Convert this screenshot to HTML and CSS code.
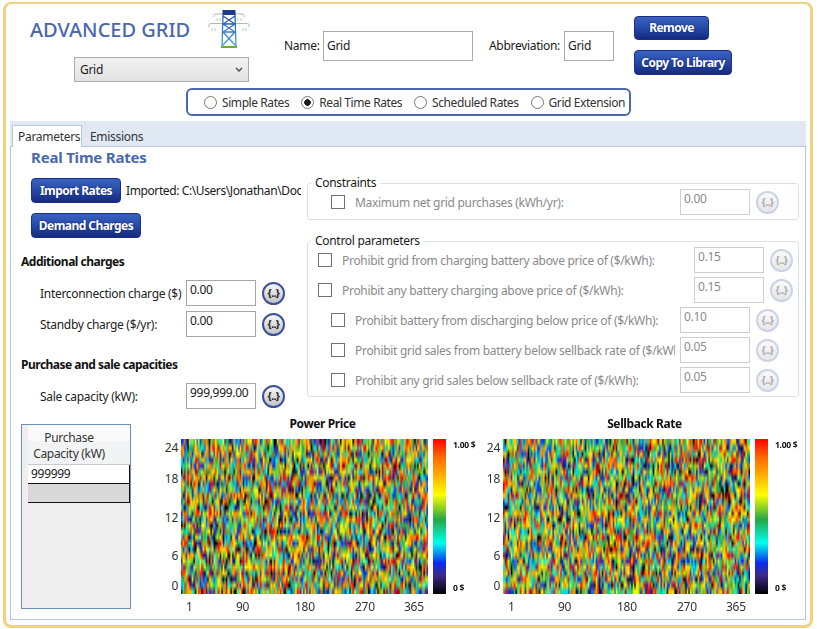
FILE: index.html
```html
<!DOCTYPE html>
<html>
<head>
	<title>Advanced Grid</title>
	<meta charset="utf-8">
	<link rel="stylesheet" href="styles.css">
</head>
<body>

<div class="window">

	<div class="header">
		<div class="top_row">
			<div class="brand">
				<div class="brand_title">
					<h1>ADVANCED GRID</h1>
					<svg class="tower" width="42" height="42" viewBox="0 0 42 42">
						<defs>
							<linearGradient id="tower_blue" x1="0" y1="0" x2="0" y2="1">
								<stop offset="0" stop-color="#2a55a8"/>
								<stop offset="1" stop-color="#4aa3e8"/>
							</linearGradient>
						</defs>
						<path d="M6 9V7.5Q6 6 8 6H34Q36 6 36 7.5V9" fill="none" stroke="#b5b5b5"/>
						<path d="M1 19V17Q1 15.5 3 15.5H39Q41 15.5 41 17V19" fill="none" stroke="#b5b5b5"/>
						<path d="M9 10v3M12 10v3M30 10v3M33 10v3M4 20v3M7 20v3M35 20v3M38 20v3" stroke="#a5dca5"/>
						<rect x="14.5" y="2" width="13" height="5" fill="#1c3a8a"/>
						<path d="M15 7L14 38M27 7L28 38M15 8L27 16L15 24L28 38M27 8L15 16L27 24L14 38M15 16H27M15 24H27" fill="none" stroke="url(#tower_blue)" stroke-width="1.3"/>
						<rect x="13" y="38" width="16" height="2" fill="#6bb01e"/>
					</svg>
				</div>
				<div class="select_wrap">
					<select class="combo"><option>Grid</option></select>
					<svg class="chevron" width="8" height="6" viewBox="0 0 8 6"><path d="M1 1L4 4L7 1" fill="none" stroke="#444" stroke-width="1.3"/></svg>
				</div>
			</div>
			<div class="fields">
				<label class="field_label name_label" for="name">Name:</label>
				<input class="text_box name_box" type="text" id="name" value="Grid">
				<label class="field_label abbr_label" for="abbr">Abbreviation:</label>
				<input class="text_box abbr_box" type="text" id="abbr" value="Grid">
			</div>
			<div class="actions">
				<button class="btn btn_remove">Remove</button>
				<button class="btn btn_copy">Copy To Library</button>
			</div>
		</div>
		<div class="rate_types">
			<label><input type="radio" name="rate"> Simple Rates</label>
			<label><input type="radio" name="rate" checked> Real Time Rates</label>
			<label><input type="radio" name="rate"> Scheduled Rates</label>
			<label><input type="radio" name="rate"> Grid Extension</label>
		</div>
	</div>

	<div class="tabstrip">
		<div class="tab active">Parameters</div>
		<div class="tab">Emissions</div>
	</div>

	<div class="panel">
		<div class="params">
			<div class="left_col">
				<h2>Real Time Rates</h2>
				<div class="import_row">
					<button class="btn btn_import">Import Rates</button>
					<span class="imported">Imported: C:\Users\Jonathan\Doc</span>
				</div>
				<button class="btn btn_demand">Demand Charges</button>

				<h3 class="first_h3">Additional charges</h3>
				<div class="charge_row">
					<span class="charge_label">Interconnection charge ($)</span>
					<input class="num_box" type="text" value="0.00">
					<button class="sens">{..}</button>
				</div>
				<div class="charge_row">
					<span class="charge_label">Standby charge ($/yr):</span>
					<input class="num_box" type="text" value="0.00">
					<button class="sens">{..}</button>
				</div>

				<h3 class="second_h3">Purchase and sale capacities</h3>
				<div class="charge_row">
					<span class="charge_label">Sale capacity (kW):</span>
					<input class="num_box" type="text" value="999,999.00">
					<button class="sens">{..}</button>
				</div>
			</div>

			<div class="right_col">
				<div class="group constraints">
					<div class="legend">Constraints</div>
					<div class="opt_row indent">
						<input type="checkbox" disabled>
						<span class="opt_label">Maximum net grid purchases (kWh/yr):</span>
						<input class="num_box" type="text" value="0.00" disabled>
						<button class="sens" disabled>{..}</button>
					</div>
				</div>
				<div class="group control">
					<div class="legend">Control parameters</div>
					<div class="opt_row">
						<input type="checkbox" disabled>
						<span class="opt_label">Prohibit grid from charging battery above price of ($/kWh):</span>
						<input class="num_box" type="text" value="0.15" disabled>
						<button class="sens" disabled>{..}</button>
					</div>
					<div class="opt_row">
						<input type="checkbox" disabled>
						<span class="opt_label">Prohibit any battery charging above price of ($/kWh):</span>
						<input class="num_box" type="text" value="0.15" disabled>
						<button class="sens" disabled>{..}</button>
					</div>
					<div class="opt_row indent">
						<input type="checkbox" disabled>
						<span class="opt_label">Prohibit battery from discharging below price of ($/kWh):</span>
						<input class="num_box" type="text" value="0.10" disabled>
						<button class="sens" disabled>{..}</button>
					</div>
					<div class="opt_row indent">
						<input type="checkbox" disabled>
						<span class="opt_label">Prohibit grid sales from battery below sellback rate of ($/kWh):</span>
						<input class="num_box" type="text" value="0.05" disabled>
						<button class="sens" disabled>{..}</button>
					</div>
					<div class="opt_row indent">
						<input type="checkbox" disabled>
						<span class="opt_label">Prohibit any grid sales below sellback rate of ($/kWh):</span>
						<input class="num_box" type="text" value="0.05" disabled>
						<button class="sens" disabled>{..}</button>
					</div>
				</div>
			</div>
		</div>

		<div class="bottom">
			<div class="capacity_table">
				<div class="cap_head"><span>Purchase</span><span>Capacity (kW)</span></div>
				<div class="cap_cell">999999</div>
				<div class="cap_cell empty"></div>
			</div>

			<div class="chart">
				<div class="chart_title">Power Price</div>
				<div class="y_axis"><span>24</span><span>18</span><span>12</span><span>6</span><span>0</span></div>
				<canvas class="heatmap" width="247" height="155" data-seed="11"></canvas>
				<div class="color_bar"></div>
				<div class="bar_labels"><span>1.00 $</span><span>0 $</span></div>
				<div class="x_axis"><span>1</span><span>90</span><span>180</span><span>270</span><span>365</span></div>
			</div>

			<div class="chart">
				<div class="chart_title">Sellback Rate</div>
				<div class="y_axis"><span>24</span><span>18</span><span>12</span><span>6</span><span>0</span></div>
				<canvas class="heatmap" width="247" height="155" data-seed="47"></canvas>
				<div class="color_bar"></div>
				<div class="bar_labels"><span>1.00 $</span><span>0 $</span></div>
				<div class="x_axis"><span>1</span><span>90</span><span>180</span><span>270</span><span>365</span></div>
			</div>
		</div>
	</div>
</div>

<script src="chart.js"></script>
</body>
</html>
```

FILE: styles.css
```css
* {
	box-sizing: border-box;
}
body {
	margin: 0;
	background: #fff;
	font-family: "Noto Sans", "Open Sans", sans-serif;
	font-size: 12px;
	letter-spacing: -0.3px;
	color: #1a1a1a;
}
.window {
	width: 810px;
	height: 626px;
	margin: 2px 0 0 3px;
	padding: 0 4px;
	background: #fff;
	border: 3px solid #f0d27c;
	border-top-width: 2px;
	border-radius: 8px;
}

/* header */
.header {
	height: 117px;
}
.top_row {
	display: flex;
	height: 84px;
}
.brand {
	width: 274px;
	padding-left: 20px;
}
.brand_title {
	display: flex;
	height: 53px;
}
h1 {
	flex: none;
	width: 160px;
	margin: 13px 0 0 0;
	font-size: 20px;
	line-height: 26px;
	font-weight: 500;
	letter-spacing: 0;
	color: #4a69ad;
	white-space: nowrap;
}
.tower {
	margin: 4px 0 0 18px;
}
.select_wrap {
	position: relative;
	width: 175px;
	margin-left: 44px;
}
.combo {
	appearance: none;
	width: 175px;
	height: 25px;
	padding: 0 5px 1px 5px;
	font: inherit;
	letter-spacing: inherit;
	color: #1a1a1a;
	background: linear-gradient(#f2f2f2, #e2e2e2);
	border: 1px solid #acacac;
}
.chevron {
	position: absolute;
	right: 6px;
	top: 10px;
}
.fields {
	display: flex;
	align-items: center;
	height: 30px;
	margin-top: 27px;
}
.field_label {
	flex: none;
	padding-bottom: 2px;
}
.name_label {
	width: 39px;
}
.abbr_label {
	width: 75px;
	margin-left: 16px;
}
.text_box {
	height: 30px;
	padding: 0 3px 2px 3px;
	font: inherit;
	letter-spacing: inherit;
	color: #1a1a1a;
	border: 1px solid #ababab;
}
.name_box {
	width: 150px;
}
.abbr_box {
	width: 50px;
}
.actions {
	display: flex;
	flex-direction: column;
	align-items: flex-start;
	gap: 10px;
	margin: 12px 0 0 20px;
}
.btn {
	padding: 0;
	font: inherit;
	font-weight: 700;
	letter-spacing: -0.55px;
	color: #fff;
	text-shadow: 0 0 2px #0d2070;
	background: linear-gradient(#3a62c0, #2547a4 55%, #16297e);
	border: 1px solid #1a2f86;
	border-radius: 4px;
	cursor: pointer;
}
.btn_remove {
	width: 75px;
	height: 24px;
	padding-bottom: 2px;
}
.btn_copy {
	width: 98px;
	height: 25px;
}
.rate_types {
	display: flex;
	align-items: center;
	gap: 12px;
	width: 445px;
	height: 28px;
	margin-left: 176px;
	padding-left: 16px;
	background: #fff;
	border: 2px solid #4a69ad;
	border-radius: 6px;
}
.rate_types label {
	display: flex;
	align-items: center;
	gap: 5px;
	letter-spacing: -0.42px;
	white-space: nowrap;
	color: #333;
}
input[type=radio] {
	appearance: none;
	width: 13px;
	height: 13px;
	margin: 0;
	background: #fff;
	border: 1px solid #777;
	border-radius: 50%;
}
input[type=radio]:checked {
	background: radial-gradient(circle, #1a1a1a 0 3px, #fff 3.6px);
}

/* tabs */
.tabstrip {
	display: flex;
	align-items: flex-end;
	height: 25px;
	padding-left: 2px;
	background: #dfe8f3;
}
.tab {
	height: 20px;
	padding: 1px 7px 0 8px;
	line-height: 20px;
	color: #333;
}
.tab.active {
	position: relative;
	top: 1px;
	width: 70px;
	height: 22px;
	padding: 1px 0 0 5px;
	background: #fff;
	border: 1px solid #b9c9dd;
	border-bottom: 0;
}
.panel {
	width: 796px;
	height: 474px;
	background: #fff;
	border: 1px solid #b9c9dd;
}

.params {
	display: grid;
	grid-template-columns: 276px 492px;
	height: 268px;
	padding-left: 20px;
}
h2 {
	margin: 0 0 0 0;
	font-size: 15px;
	line-height: 20px;
	font-weight: 700;
	letter-spacing: -0.2px;
	color: #4a69ad;
}
.import_row {
	display: flex;
	align-items: center;
	margin-top: 11px;
}
.btn_import {
	width: 90px;
	height: 25px;
	flex: none;
}
.imported {
	width: 175px;
	margin-left: 5px;
	letter-spacing: -0.4px;
	overflow: hidden;
	white-space: nowrap;
}
.btn_demand {
	display: block;
	width: 110px;
	height: 25px;
	margin-top: 10px;
}
h3 {
	margin: 0;
	font-size: 12px;
	line-height: 18px;
	font-weight: 700;
	letter-spacing: -0.5px;
	color: #111;
	margin-left: -10px;
}
.first_h3 {
	margin-top: 15px;
}
.second_h3 {
	margin-top: 19px;
}
.charge_row {
	display: flex;
	align-items: center;
	height: 26px;
	margin-bottom: 5px;
}
.first_h3 + .charge_row, .second_h3 + .charge_row {
	margin-top: 9px;
}
.charge_label {
	width: 146px;
	margin-left: 9px;
	white-space: nowrap;
	color: #222;
}
.num_box {
	flex: none;
	width: 70px;
	height: 26px;
	padding: 0 3px 7px 3px;
	font: inherit;
	letter-spacing: inherit;
	color: #1a1a1a;
	background: #fff;
	border: 1px solid #a6a6a6;
}
.num_box:disabled {
	color: #8a8a8a;
	border-color: #cfcfcf;
}
.sens {
	flex: none;
	width: 23px;
	height: 23px;
	margin-left: 6px;
	padding: 0;
	font: 700 10.5px "Noto Sans", sans-serif;
	letter-spacing: -0.6px;
	color: #1a1a1a;
	background: linear-gradient(#f6f6f6, #c4c4c4);
	border: 2px solid #3d5098;
	border-radius: 50%;
}
.sens:disabled {
	color: #aaa;
	background: linear-gradient(#fafafa, #e6e6e6);
	border-color: #cbd3e4;
}

/* right side groups */
.right_col {
	padding-top: 36px;
}
.group {
	position: relative;
	width: 492px;
	border: 1px solid #dbe1e8;
	border-radius: 3px;
}
.constraints {
	height: 37px;
	padding-top: 5px;
}
.control {
	height: 156px;
	margin-top: 21px;
	padding-top: 5px;
}
.legend {
	position: absolute;
	left: 3px;
	top: -9px;
	padding: 0 4px;
	line-height: 16px;
	color: #1a1a1a;
	background: #fff;
}
.opt_row {
	display: flex;
	align-items: center;
	height: 26px;
	margin-bottom: 4px;
	padding-left: 10px;
}
.opt_row.indent {
	padding-left: 23px;
}
input[type=checkbox] {
	appearance: none;
	flex: none;
	width: 14px;
	height: 14px;
	margin: 0 10px 0 0;
	background: #fff;
	border: 1px solid #707070;
}
.opt_label {
	width: 352px;
	padding-top: 1px;
	overflow: hidden;
	white-space: nowrap;
	color: #8a8a8a;
}
.indent .opt_label {
	width: 320px;
	margin-right: 5px;
}

/* bottom: table and charts */
.bottom {
	display: flex;
	padding-left: 10px;
}
.capacity_table {
	flex: none;
	width: 110px;
	height: 185px;
	margin-top: 9px;
	padding-left: 6px;
	background: #efefef;
	border: 1px solid #6b8fb5;
}
.cap_head {
	display: flex;
	flex-direction: column;
	align-items: center;
	height: 40px;
	padding: 5px 20px 0 0;
	line-height: 16px;
	color: #333;
	background: linear-gradient(#fafafa 40%, #f2f3f5 40%);
	border-bottom: 1px solid #ccc;
}
.cap_cell {
	height: 19px;
	padding-left: 3px;
	line-height: 18px;
	background: #fff;
	border-right: 1px solid #111;
	border-bottom: 1px solid #111;
}
.cap_cell.empty {
	background: #d9d9d9;
}
.chart {
	display: grid;
	grid-template-columns: 28px 247px 15px auto;
	grid-template-rows: 24px 155px 26px;
	column-gap: 3px;
	flex: none;
	width: 322px;
	margin-left: 19px;
}
.chart + .chart {
	margin-left: 0;
}
.chart_title {
	grid-column: 2;
	padding-left: 36px;
	font-weight: 700;
	letter-spacing: -0.4px;
	text-align: center;
	white-space: nowrap;
	color: #111;
}
.y_axis {
	grid-row: 2;
	grid-column: 1;
	display: grid;
	grid-template-rows: 31px 39px 38px 30px 17px;
	text-align: right;
	line-height: 18px;
	color: #333;
}
.heatmap {
	grid-row: 2;
	grid-column: 2;
	display: block;
}
.color_bar {
	grid-row: 2;
	grid-column: 3;
	margin-left: 2px;
	background: linear-gradient(#ff0000, #ff6a00 12%, #ffa500 22%, #ffff00 36%, #22a845 52%, #00ffee 67%, #0a2cf0 80%, #3d2a8a 88%, #000);
}
.bar_labels {
	grid-row: 2;
	grid-column: 4;
	display: flex;
	flex-direction: column;
	justify-content: space-between;
	padding: 0 0 0 4px;
	font-size: 8.5px;
	font-weight: 700;
	line-height: 12px;
	white-space: nowrap;
	color: #111;
}
.x_axis {
	grid-row: 3;
	grid-column: 2;
	display: grid;
	grid-template-columns: 50px 59px 60px 49px auto;
	padding: 4px 0 0 5px;
	line-height: 18px;
	color: #333;
}
```

FILE: chart.js
```js
// color stops of the legend, low to high
let stops = [
	[0, 0, 0, 0],
	[0.12, 61, 42, 138],
	[0.20, 10, 44, 240],
	[0.33, 0, 255, 238],
	[0.48, 34, 168, 69],
	[0.64, 255, 255, 0],
	[0.78, 255, 165, 0],
	[0.88, 255, 106, 0],
	[1, 255, 0, 0]
];

function colorOf(v) {
	for (let i = 1; i < stops.length; i++) {
		if (v <= stops[i][0]) {
			let a = stops[i - 1], b = stops[i];
			let t = (v - a[0]) / (b[0] - a[0]);
			return [1, 2, 3].map(k => a[k] + (b[k] - a[k]) * t);
		}
	}
	return stops[stops.length - 1].slice(1);
}

function randomFrom(seed) {
	return () => {
		seed = (seed * 1664525 + 1013904223) % 4294967296;
		return seed / 4294967296;
	};
}

document.querySelectorAll('.heatmap').forEach(canvas => {
	let rnd = randomFrom(parseInt(canvas.dataset.seed));
	let cols = 160, rows = 26;
	let small = document.createElement('canvas');
	small.width = cols;
	small.height = rows;
	let sctx = small.getContext('2d');
	let img = sctx.createImageData(cols, rows);

	for (let y = 0; y < rows; y++) {
		for (let x = 0; x < cols; x++) {
			let v = rnd() * 0.75 + rnd() * 0.25;
			v = Math.min(1, Math.max(0, 0.52 + (v - 0.5) * 1.3));
			let c = colorOf(v);
			let p = (y * cols + x) * 4;
			img.data[p] = c[0];
			img.data[p + 1] = c[1];
			img.data[p + 2] = c[2];
			img.data[p + 3] = 255;
		}
	}
	sctx.putImageData(img, 0, 0);

	let ctx = canvas.getContext('2d');
	ctx.imageSmoothingEnabled = true;
	ctx.drawImage(small, 0, 0, canvas.width, canvas.height);
});
```
